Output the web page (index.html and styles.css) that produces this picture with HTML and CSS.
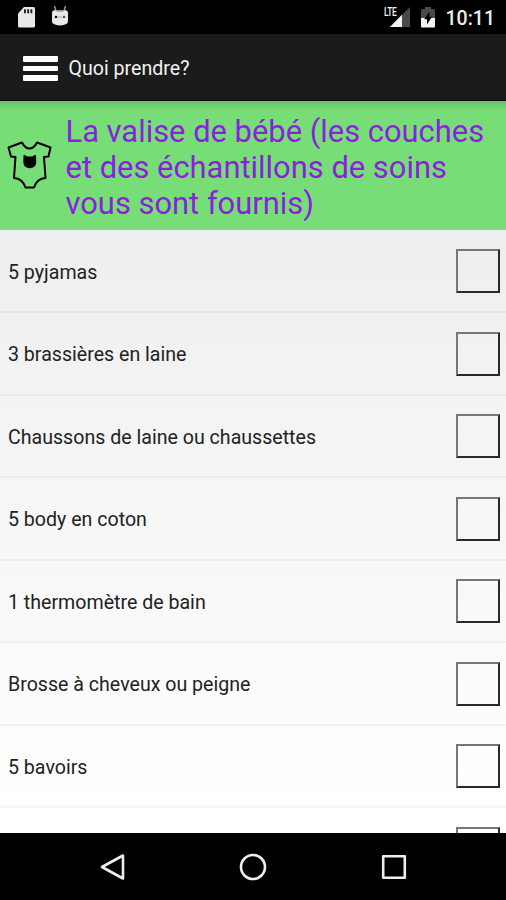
FILE: index.html
```html
<!DOCTYPE html>
<html lang="fr">
<head>
    <meta charset="UTF-8">
    <meta name="viewport" content="width=device-width, initial-scale=1.0">
    <title>Quoi prendre?</title>
    <link rel="stylesheet" href="styles.css">
</head>
<body>
    <div class="status-bar">
        <div class="status-left">
            <svg class="sd-icon" viewBox="0 0 17 21">
                <path fill="#e8e8e8" d="M6 0h9.500Q17 0 17 1.500V19Q17 20.500 15.500 20.500H1.500Q0 20.500 0 19V6.500z"/>
                <path fill="#222" d="M6 2.200h1.900v4H6zM9.200 2.200h1.900v4H9.200zM12.400 2.200h1.900v4h-1.900z"/>
            </svg>
            <svg class="droid-icon" viewBox="0 0 18 20">
                <path fill="none" stroke="#999" stroke-width="1.500" d="M3.500 0l1.500 5M14.500 0l-1.500 5"/>
                <path fill="#e8e8e8" d="M1 7Q1 4.500 4 4H14Q17 4.500 17 7V15Q17 17.500 14 18.500Q9 20.500 4 18.500Q1 17.500 1 15z"/>
                <path fill="#999" d="M4 4h10l-2 1.800H6z"/>
                <circle cx="5" cy="11" r="1.300" fill="#111"/>
                <circle cx="13" cy="11" r="1.300" fill="#555"/>
                <path stroke="#aaa" stroke-width="1" d="M7 11h4"/>
            </svg>
        </div>
        <div class="status-right">
            <div class="signal">
                <svg viewBox="0 0 21 21">
                    <path fill="#4a4a4a" d="M21 0v20H1z"/>
                    <path fill="#f4f4f4" d="M13 7.700V20H1z"/>
                </svg>
                <span class="lte">LTE</span>
            </div>
            <svg class="battery" viewBox="0 0 14 21">
                <path fill="#4a4a4a" d="M4 0h6v2h2.500Q14 2 14 3.500V11H0V3.500Q0 2 1.500 2H4z"/>
                <path fill="#f4f4f4" d="M0 11h14v8.500q0 1-1 1H1q-1 0-1-1z"/>
                <path fill="#000" d="M8.500 4.500v5.300H11L6 17.500v-5.300H3.200z"/>
            </svg>
            <span class="clock">10:11</span>
        </div>
    </div>

    <div class="action-bar">
        <button class="menu" aria-label="Menu"><span></span><span></span><span></span></button>
        <h1>Quoi prendre?</h1>
    </div>

    <div class="category">
        <svg class="body-icon" viewBox="0 0 46 50">
            <path fill="none" stroke="#000" stroke-width="2" stroke-linejoin="round" d="M15 2.500Q18 8.500 22.500 8.500T30 2.500L43.500 7.500L41.500 16.500L37 17L38.500 38Q30 38.500 27 47.500H18.500Q15.500 38.500 7 38L8.500 17L4 16.500L1.500 7.500z"/>
            <path d="M16.500 15.200Q18.500 14.200 20 16.500H25.500Q27 14.200 29 15.200L29.300 22Q29 28 22.800 28.200Q16.500 28 16.300 22z"/>
        </svg>
        <h2>La valise de bébé (les couches et des échantillons de soins vous sont fournis)</h2>
    </div>

    <ul class="list">
        <li><span>5 pyjamas</span><i class="check"></i></li>
        <li><span>3 brassières en laine</span><i class="check"></i></li>
        <li><span>Chaussons de laine ou chaussettes</span><i class="check"></i></li>
        <li><span>5 body en coton</span><i class="check"></i></li>
        <li><span>1 thermomètre de bain</span><i class="check"></i></li>
        <li><span>Brosse à cheveux ou peigne</span><i class="check"></i></li>
        <li><span>5 bavoirs</span><i class="check"></i></li>
        <li><span></span><i class="check"></i></li>
    </ul>

    <div class="nav-bar">
        <svg viewBox="0 0 28 28"><path d="M24 2.500v23L3 14z"/></svg>
        <svg viewBox="0 0 28 28"><circle cx="14" cy="14" r="12"/></svg>
        <svg viewBox="0 0 28 28"><rect x="3.200" y="3.200" width="21.600" height="21.600"/></svg>
    </div>
</body>
</html>
```
FILE: styles.css
```css
* { margin: 0; padding: 0; box-sizing: border-box; }
body {
    width: 506px;
    height: 900px;
    display: flex;
    flex-direction: column;
    overflow: hidden;
    background: #000;
    font-family: Roboto, sans-serif;
}

.status-bar {
    height: 34px;
    flex: none;
    display: flex;
    justify-content: space-between;
    padding: 0 11px 0 17.5px;
    background: #000;
}
.status-left {
    display: flex;
    align-items: flex-start;
    gap: 16px;
    padding-top: 7px;
}
.sd-icon { width: 17px; height: 21px; }
.droid-icon { width: 18px; height: 20px; margin-top: -1px; }
.status-right {
    display: flex;
    align-items: flex-start;
    padding-top: 7px;
}
.signal { position: relative; width: 21px; height: 21px; margin-right: 11px; }
.signal svg { width: 21px; height: 21px; display: block; }
.lte {
    position: absolute;
    left: -5px;
    top: -1px;
    padding-right: 2px;
    font-size: 13px;
    line-height: 12px;
    font-weight: 500;
    letter-spacing: -0.5px;
    color: #f4f4f4;
    background: #000;
    transform: scaleX(0.65);
    transform-origin: left;
}
.battery { width: 14px; height: 21px; margin-right: 11px; }
.clock {
    font-size: 19.5px;
    line-height: 23px;
    font-weight: 500;
    color: #eee;
}

.action-bar {
    height: 67px;
    flex: none;
    display: flex;
    align-items: center;
    padding: 3px 0 0 22.5px;
    background: #1b1b1b;
    border-bottom: 1px solid #000;
}
.menu {
    width: 35px;
    display: flex;
    flex-direction: column;
    gap: 4px;
    background: none;
    border: none;
}
.menu span {
    height: 5.5px;
    background: #fff;
    border-radius: 1px;
}
.action-bar h1 {
    margin-left: 11px;
    font-size: 19.6px;
    font-weight: 400;
    color: #f2f2f2;
}

.category {
    height: 128.5px;
    flex: none;
    display: flex;
    align-items: center;
    padding-left: 7px;
    background: linear-gradient(#66c466 0, #77dd77 10px);
}
.body-icon { width: 46px; height: 50px; flex: none; }
.category h2 {
    margin: 5px 0 0 12.5px;
    width: 430px;
    font-size: 30.9px;
    line-height: 36px;
    font-weight: 400;
    color: #8b1fe0;
}

.list {
    flex: 1;
    min-height: 0;
    padding-top: 1px;
    overflow: hidden;
    list-style: none;
    background: linear-gradient(#eee, #fff 95%);
}
.list li {
    height: 82.5px;
    display: flex;
    justify-content: space-between;
    align-items: center;
    padding: 1px 6px 0 8px;
    border-bottom: 2px solid rgba(0, 0, 0, 0.04);
    font-size: 19.6px;
    color: #222;
}
.list li span { padding-top: 2px; }
.check {
    width: 44px;
    height: 44px;
    border: 2px solid #2a2a2a;
    border-top-color: #777;
    border-left-color: #777;
}

.nav-bar {
    height: 67px;
    flex: none;
    display: flex;
    justify-content: center;
    align-items: center;
    gap: 112.5px;
    background: #000;
}
.nav-bar svg {
    width: 28px;
    height: 28px;
    fill: none;
    stroke: #eee;
    stroke-width: 2.6;
    stroke-linejoin: round;
}
```
